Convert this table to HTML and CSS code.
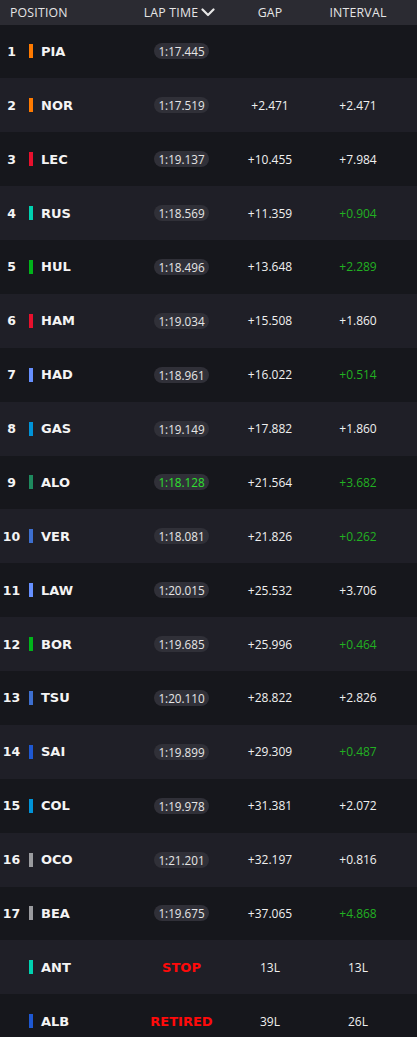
FILE: index.html
```html
<!DOCTYPE html>
<html lang="en">
<head>
<meta charset="utf-8">
<title>Timing</title>
<link rel="stylesheet" href="styles.css">
</head>
<body>
<div class="table">
  <div class="head">
    <div class="h-pos">POSITION</div>
    <div class="h-col h-lap">LAP TIME <svg class="chev" width="14" height="9" viewBox="0 0 14 9"><polyline points="1.5,1.5 7,7 12.5,1.5" fill="none" stroke="#e6e6e6" stroke-width="2.2" stroke-linecap="round" stroke-linejoin="round"/></svg></div>
    <div class="h-col">GAP</div>
    <div class="h-col">INTERVAL</div>
  </div>

  <div class="row"><div class="pos"><span class="num">1</span><span class="bar mcl"></span><span class="code">PIA</span></div><div class="lap"><span class="pill">1:17.445</span></div><div class="val"></div><div class="val"></div></div>
  <div class="row"><div class="pos"><span class="num">2</span><span class="bar mcl"></span><span class="code">NOR</span></div><div class="lap"><span class="pill">1:17.519</span></div><div class="val">+2.471</div><div class="val">+2.471</div></div>
  <div class="row"><div class="pos"><span class="num">3</span><span class="bar fer"></span><span class="code">LEC</span></div><div class="lap"><span class="pill">1:19.137</span></div><div class="val">+10.455</div><div class="val">+7.984</div></div>
  <div class="row"><div class="pos"><span class="num">4</span><span class="bar mer"></span><span class="code">RUS</span></div><div class="lap"><span class="pill">1:18.569</span></div><div class="val">+11.359</div><div class="val green">+0.904</div></div>
  <div class="row"><div class="pos"><span class="num">5</span><span class="bar sau"></span><span class="code">HUL</span></div><div class="lap"><span class="pill">1:18.496</span></div><div class="val">+13.648</div><div class="val green">+2.289</div></div>
  <div class="row"><div class="pos"><span class="num">6</span><span class="bar fer"></span><span class="code">HAM</span></div><div class="lap"><span class="pill">1:19.034</span></div><div class="val">+15.508</div><div class="val">+1.860</div></div>
  <div class="row"><div class="pos"><span class="num">7</span><span class="bar rb"></span><span class="code">HAD</span></div><div class="lap"><span class="pill">1:18.961</span></div><div class="val">+16.022</div><div class="val green">+0.514</div></div>
  <div class="row"><div class="pos"><span class="num">8</span><span class="bar alp"></span><span class="code">GAS</span></div><div class="lap"><span class="pill">1:19.149</span></div><div class="val">+17.882</div><div class="val">+1.860</div></div>
  <div class="row"><div class="pos"><span class="num">9</span><span class="bar ast"></span><span class="code">ALO</span></div><div class="lap"><span class="pill best">1:18.128</span></div><div class="val">+21.564</div><div class="val green">+3.682</div></div>
  <div class="row"><div class="pos"><span class="num">10</span><span class="bar rbr"></span><span class="code">VER</span></div><div class="lap"><span class="pill">1:18.081</span></div><div class="val">+21.826</div><div class="val green">+0.262</div></div>
  <div class="row"><div class="pos"><span class="num">11</span><span class="bar rb"></span><span class="code">LAW</span></div><div class="lap"><span class="pill">1:20.015</span></div><div class="val">+25.532</div><div class="val">+3.706</div></div>
  <div class="row"><div class="pos"><span class="num">12</span><span class="bar sau"></span><span class="code">BOR</span></div><div class="lap"><span class="pill">1:19.685</span></div><div class="val">+25.996</div><div class="val green">+0.464</div></div>
  <div class="row"><div class="pos"><span class="num">13</span><span class="bar rbr"></span><span class="code">TSU</span></div><div class="lap"><span class="pill">1:20.110</span></div><div class="val">+28.822</div><div class="val">+2.826</div></div>
  <div class="row"><div class="pos"><span class="num">14</span><span class="bar wil"></span><span class="code">SAI</span></div><div class="lap"><span class="pill">1:19.899</span></div><div class="val">+29.309</div><div class="val green">+0.487</div></div>
  <div class="row"><div class="pos"><span class="num">15</span><span class="bar alp"></span><span class="code">COL</span></div><div class="lap"><span class="pill">1:19.978</span></div><div class="val">+31.381</div><div class="val">+2.072</div></div>
  <div class="row"><div class="pos"><span class="num">16</span><span class="bar haa"></span><span class="code">OCO</span></div><div class="lap"><span class="pill">1:21.201</span></div><div class="val">+32.197</div><div class="val">+0.816</div></div>
  <div class="row"><div class="pos"><span class="num">17</span><span class="bar haa"></span><span class="code">BEA</span></div><div class="lap"><span class="pill">1:19.675</span></div><div class="val">+37.065</div><div class="val green">+4.868</div></div>
  <div class="row"><div class="pos"><span class="num"></span><span class="bar mer"></span><span class="code">ANT</span></div><div class="lap"><span class="status">STOP</span></div><div class="val">13L</div><div class="val">13L</div></div>
  <div class="row"><div class="pos"><span class="num"></span><span class="bar wil"></span><span class="code">ALB</span></div><div class="lap"><span class="status">RETIRED</span></div><div class="val">39L</div><div class="val">26L</div></div>
</div>
</body>
</html>
```
FILE: styles.css
```css
html, body {
  margin: 0;
  padding: 0;
  background: #16171c;
}
body {
  font-family: "Open Sans", "Noto Sans", sans-serif;
  color: #f2f2f2;
}
.table {
  width: 417px;
}
.head {
  display: grid;
  grid-template-columns: 137px 89px 88px 88px 1fr;
  align-items: center;
  height: 24.5px;
  background: #2b2b32;
  color: #e6e6e6;
  font-size: 12.3px;
  letter-spacing: 0.2px;
}
.h-pos {
  padding-left: 10px;
}
.h-col {
  text-align: center;
}
.h-lap {
  display: flex;
  align-items: center;
  justify-content: center;
  gap: 3px;
  margin-left: -4px;
}
.chev {
  display: block;
}
.row {
  display: grid;
  grid-template-columns: 137px 89px 88px 88px 1fr;
  align-items: center;
  height: 53.88px;
  background: #16171c;
}
.row:nth-child(odd) {
  background: #1f1f27;
}
.pos {
  display: flex;
  align-items: center;
}
.num {
  width: 23px;
  text-align: center;
  font-family: "DejaVu Sans", sans-serif;
  font-weight: 700;
  font-size: 12.5px;
  color: #f4f4f4;
}
.bar {
  width: 4px;
  height: 14px;
  margin-left: 6px;
}
.code {
  margin-left: 8px;
  font-family: "DejaVu Sans", sans-serif;
  font-weight: 700;
  font-size: 13px;
  color: #f4f4f4;
}
.mcl { background: #ff7a00; }
.fer { background: #e8102d; }
.mer { background: #00d2b0; }
.sau { background: #00b41a; }
.rb { background: #6690ff; }
.alp { background: #0093d8; }
.ast { background: #1e8a5e; }
.rbr { background: #3d6fcf; }
.wil { background: #1e58d2; }
.haa { background: #9a9b9f; }
.lap {
  display: flex;
  justify-content: center;
}
.pill {
  display: inline-block;
  height: 16px;
  line-height: 16px;
  padding: 0 4.5px;
  border-radius: 8px;
  background: #303038;
  font-size: 11.7px;
  color: #e6e6e6;
}
.pill.best {
  color: #2fe02f;
}
.status {
  font-family: "DejaVu Sans", sans-serif;
  font-weight: 700;
  font-size: 13px;
  color: #ff0a0a;
}
.val {
  text-align: center;
  font-size: 12px;
  color: #f0f0f0;
}
.val.green {
  color: #22b022;
}
```
